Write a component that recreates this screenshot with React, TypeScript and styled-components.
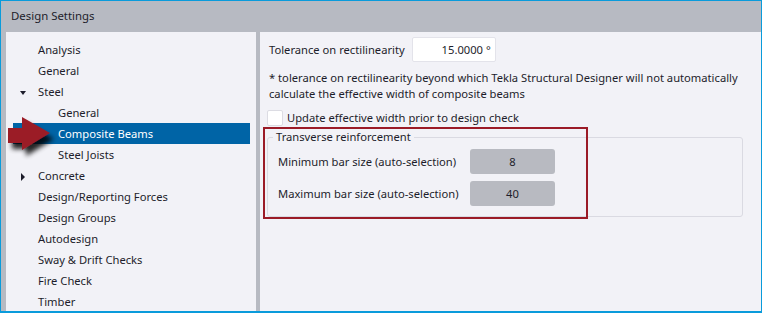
import React from 'react';
import styled, { createGlobalStyle } from 'styled-components';

const GlobalStyle = createGlobalStyle`
  html, body {
    margin: 0;
    padding: 0;
    background: #ffffff;
  }
  body {
    font-family: "Noto Sans", "Open Sans", sans-serif;
    font-size: 11.2px;
    color: #1d1d2b;
  }
`;

const Window = styled.div`
  width: 762px;
  height: 313px;
  box-sizing: border-box;
  border: 1px solid #0a9bdb;
  border-bottom-width: 2px;
  background: #b7bac2;
  display: flex;
  flex-direction: column;
  overflow: hidden;
`;

const TitleBar = styled.div`
  height: 31px;
  flex: none;
  display: flex;
  align-items: center;
  padding-left: 10px;
  padding-bottom: 2px;
  box-sizing: border-box;
  font-size: 11.4px;
  color: #1d1d2b;
`;

const Body = styled.div`
  flex: 1;
  display: flex;
  padding-left: 5px;
  gap: 4px;
  min-height: 0;
`;

const TreePanel = styled.div`
  width: 250px;
  flex: none;
  background: #f2f2f7;
  padding-top: 7px;
  box-sizing: border-box;
  position: relative;
`;

const TreeRow = styled.div<{ $level: number; $selected?: boolean }>`
  height: 21px;
  display: flex;
  align-items: center;
  position: relative;
  margin-left: 7px;
  margin-right: 6px;
  padding-left: ${p => (p.$level === 2 ? 45 : 25)}px;
  background: ${p => (p.$selected ? '#0064a6' : 'transparent')};
  color: ${p => (p.$selected ? '#ffffff' : '#1d1d2b')};
  white-space: nowrap;
`;

const Toggle = styled.span<{ $open: boolean }>`
  position: absolute;
  left: ${p => (p.$open ? 7 : 8)}px;
  top: 50%;
  width: 0;
  height: 0;
  ${p =>
    p.$open
      ? `border-left: 3.5px solid transparent;
         border-right: 3.5px solid transparent;
         border-top: 4px solid #1d1d2b;
         margin-top: -1px;`
      : `border-top: 4px solid transparent;
         border-bottom: 4px solid transparent;
         border-left: 4px solid #1d1d2b;
         margin-top: -3px;`}
`;

const Pointer = styled.svg`
  position: absolute;
  left: 2px;
  top: 84px;
  overflow: visible;
  pointer-events: none;
`;

const ContentPanel = styled.div`
  flex: 1;
  background: #f2f2f7;
  padding: 5px 0 0 9px;
  position: relative;
  box-sizing: border-box;
`;

const FieldRow = styled.div`
  display: flex;
  align-items: center;
  height: 25px;
  gap: 7px;
`;

const TextBox = styled.div`
  width: 84px;
  height: 25px;
  box-sizing: border-box;
  background: #ffffff;
  border: 1px solid #e3e3ea;
  border-radius: 2px;
  display: flex;
  align-items: center;
  justify-content: flex-end;
  padding-right: 4px;
`;

const Note = styled.p`
  margin: 8px 0 0 0;
  line-height: 16px;
  width: 480px;
`;

const CheckRow = styled.label`
  display: flex;
  align-items: center;
  gap: 4px;
  margin: 7px 0 0 -2px;
  height: 17px;
`;

const CheckBox = styled.span`
  width: 16px;
  height: 16px;
  box-sizing: border-box;
  background: #ffffff;
  border: 1px solid #dcdce3;
  border-radius: 2px;
`;

const GroupBox = styled.fieldset`
  margin: 3px 0 0 -2px;
  width: 476px;
  box-sizing: border-box;
  border: 1px solid #dadae2;
  border-radius: 3px;
  padding: 4px 10px 10px 10px;
  display: flex;
  flex-direction: column;
  gap: 7px;
`;

const Legend = styled.legend`
  padding: 0 3px;
  margin-left: -5px;
  line-height: 16px;
`;

const SizeRow = styled.div`
  display: flex;
  align-items: center;
  justify-content: space-between;
  width: 277px;
  white-space: nowrap;
`;

const ValueBox = styled.div`
  width: 85px;
  height: 25px;
  flex: none;
  background: #b8bac1;
  border-radius: 3px;
  display: flex;
  align-items: center;
  justify-content: center;
`;

const Highlight = styled.div`
  position: absolute;
  left: 3px;
  top: 95px;
  width: 325px;
  height: 92px;
  box-sizing: border-box;
  border: 2.5px solid #9b1b27;
  pointer-events: none;
`;

type Node = { label: string; level: number; toggle?: 'open' | 'closed'; selected?: boolean };

const tree: Node[] = [
  { label: 'Analysis', level: 1 },
  { label: 'General', level: 1 },
  { label: 'Steel', level: 1, toggle: 'open' },
  { label: 'General', level: 2 },
  { label: 'Composite Beams', level: 2, selected: true },
  { label: 'Steel Joists', level: 2 },
  { label: 'Concrete', level: 1, toggle: 'closed' },
  { label: 'Design/Reporting Forces', level: 1 },
  { label: 'Design Groups', level: 1 },
  { label: 'Autodesign', level: 1 },
  { label: 'Sway & Drift Checks', level: 1 },
  { label: 'Fire Check', level: 1 },
  { label: 'Timber', level: 1 },
];

export default function App() {
  return (
    <>
      <GlobalStyle />
      <Window>
        <TitleBar>Design Settings</TitleBar>
        <Body>
          <TreePanel>
            {tree.map((n, i) => (
              <TreeRow key={i} $level={n.level} $selected={n.selected}>
                {n.toggle && <Toggle $open={n.toggle === 'open'} />}
                {n.label}
              </TreeRow>
            ))}
            <Pointer width="44" height="36" viewBox="0 0 44 36">
              <defs>
                <filter id="arrowShadow" x="-30%" y="-30%" width="170%" height="190%">
                  <feGaussianBlur in="SourceAlpha" stdDeviation="2.5" />
                  <feOffset dx="4" dy="6" result="blur" />
                  <feComponentTransfer>
                    <feFuncA type="linear" slope="0.85" />
                  </feComponentTransfer>
                  <feMerge>
                    <feMergeNode />
                    <feMergeNode in="SourceGraphic" />
                  </feMerge>
                </filter>
              </defs>
              <path
                d="M0 12 L14 12 L14 1 L42 17 L14 34 L14 27 L0 27 Z"
                fill="#9b1b27"
                filter="url(#arrowShadow)"
              />
            </Pointer>
          </TreePanel>
          <ContentPanel>
            <FieldRow>
              <span>Tolerance on rectilinearity</span>
              <TextBox>15.0000 °</TextBox>
            </FieldRow>
            <Note>
              * tolerance on rectilinearity beyond which Tekla Structural Designer will not automatically
              calculate the effective width of composite beams
            </Note>
            <CheckRow>
              <CheckBox />
              <span>Update effective width prior to design check</span>
            </CheckRow>
            <GroupBox>
              <Legend>Transverse reinforcement</Legend>
              <SizeRow>
                <span>Minimum bar size (auto-selection)</span>
                <ValueBox>8</ValueBox>
              </SizeRow>
              <SizeRow>
                <span>Maximum bar size (auto-selection)</span>
                <ValueBox>40</ValueBox>
              </SizeRow>
            </GroupBox>
            <Highlight />
          </ContentPanel>
        </Body>
      </Window>
    </>
  );
}
